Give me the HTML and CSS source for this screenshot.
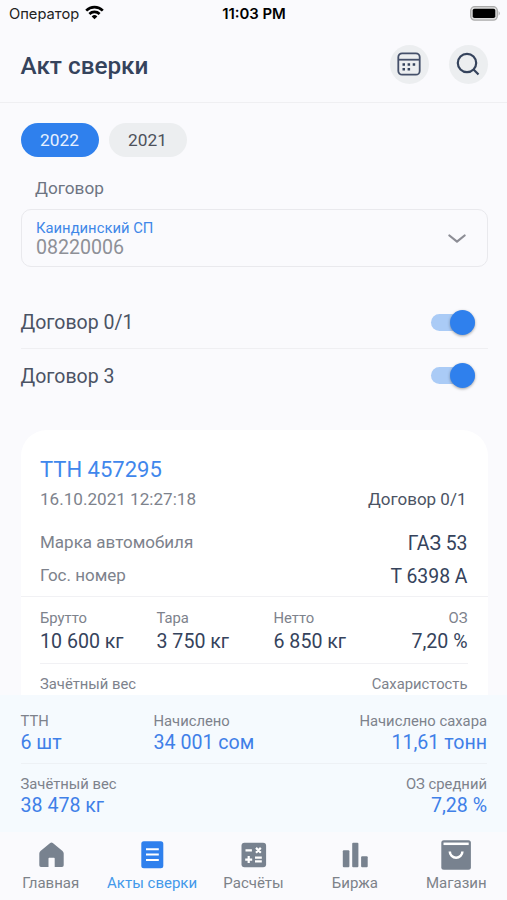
FILE: index.html
```html
<!DOCTYPE html>
<html lang="ru">
<head>
<meta charset="utf-8">
<title>Акт сверки</title>
<link rel="stylesheet" href="styles.css">
</head>
<body>
<div class="screen">
  <div class="status">
    <div class="carrier"><span>Оператор</span>
      <svg width="19" height="15" viewBox="0 0 19 15"><g fill="none" stroke="#000" stroke-width="2.7"><path d="M1.2 5.6a11.8 11.8 0 0 1 16.6 0"/><path d="M4.4 9a7.3 7.3 0 0 1 10.2 0"/></g><path d="M9.500 14.300L6.700 11.400a4 4 0 0 1 5.600 0z"/></svg>
    </div>
    <div class="clock">11:03 PM</div>
    <div class="power"><svg width="31" height="15" viewBox="0 0 31 15"><rect x=".7" y=".7" width="26.600" height="13.400" rx="4" fill="#ddd" stroke="#aaa" stroke-width="1.300"/><rect x="2.700" y="2.700" width="22.600" height="9.400" rx="1.800"/><path d="M28.600 5q2.400 2.400 0 4.800z" fill="#aaa"/></svg></div>
  </div>
  <header class="header">
    <h1>Акт сверки</h1>
    <button class="round"><svg width="24" height="24" viewBox="0 0 24 24"><g fill="none" stroke="#45506a" stroke-width="1.800"><rect x="1.300" y="1.300" width="21.400" height="21.400" rx="3.800"/><path d="M1.300 7.700h21.400"/></g><path d="M5.500 11.300h2.500v2.500h-2.500zM10.600 11.300h2.500v2.500h-2.500zM15.700 11.300h2.500v2.500h-2.500zM5.500 16.100h2.500v2.500h-2.500zM10.600 16.100h2.500v2.500h-2.500z" fill="#35435c"/></svg></button>
    <button class="round"><svg width="24" height="24" viewBox="0 0 24 24"><g fill="none" stroke="#35435c" stroke-width="2.200"><circle cx="11" cy="11" r="9.200"/><path d="M17.300 17.300l5.200 5.200"/></g></svg></button>
  </header>
  <main class="content">
    <div class="years"><button class="year on">2022</button><button class="year">2021</button></div>
    <div class="label">Договор</div>
    <div class="select">
      <div><div class="sel-name">Каиндинский СП</div><div class="sel-no">08220006</div></div>
      <svg width="18" height="10" viewBox="0 0 18 10"><path d="M1.400 1.500L9 7.700l7.600-6.200" fill="none" stroke="#8c8d95" stroke-width="2.200" stroke-linecap="round" stroke-linejoin="round"/></svg>
    </div>
    <div class="toggles">
      <div class="toggle"><span>Договор 0/1</span><i class="switch"></i></div>
      <div class="toggle"><span>Договор 3</span><i class="switch"></i></div>
    </div>
    <section class="card">
      <div class="card-top">
        <div class="ttn">ТТН 457295</div>
        <div class="line date"><span>16.10.2021 12:27:18</span><span class="contract">Договор 0/1</span></div>
        <div class="line"><span>Марка автомобиля</span><b>ГАЗ 53</b></div>
        <div class="line"><span>Гос. номер</span><b>Т 6398 А</b></div>
      </div>
      <div class="weights">
        <div><small>Брутто</small><b>10 600 кг</b></div>
        <div><small>Тара</small><b>3 750 кг</b></div>
        <div><small>Нетто</small><b>6 850 кг</b></div>
        <div class="end"><small>ОЗ</small><b>7,20 %</b></div>
      </div>
      <div class="more"><small>Зачётный вес</small><small>Сахаристость</small></div>
    </section>
  </main>
  <section class="summary">
    <div class="sum-row first">
      <div><small>ТТН</small><b>6 шт</b></div>
      <div><small>Начислено</small><b>34 001 сом</b></div>
      <div class="end"><small>Начислено сахара</small><b>11,61 тонн</b></div>
    </div>
    <div class="sum-row">
      <div><small>Зачётный вес</small><b>38 478 кг</b></div>
      <div class="end"><small>ОЗ средний</small><b>7,28 %</b></div>
    </div>
  </section>
  <nav class="tabs">
    <a><svg width="30" height="30" viewBox="0 0 30 30"><path d="M15.500 2.600Q16.200 2.600 16.800 3.100L26.500 11q1.200 1 1.200 2.500V25.300q0 1.700-1.700 1.700H18.700V18.500q0-.7-.7-.7H13.200q-.7 0-.7.700V27H5q-1.700 0-1.700-1.700V13.500Q3.300 12 4.500 11L14.200 3.100Q14.800 2.600 15.500 2.600z"/></svg><span>Главная</span></a>
    <a class="on"><svg width="30" height="30" viewBox="0 0 30 30"><rect x="4.300" y="1.300" width="22" height="27" rx="2.500"/><path d="M9 9.200h12.800M9 14.400h12.800M9 19.900h12.800" stroke="#fff" stroke-width="2"/></svg><span>Акты сверки</span></a>
    <a><svg width="30" height="30" viewBox="0 0 30 30"><rect x="3.500" y="2.700" width="24.600" height="24.600" rx="3"/><path d="M7.500 10.300h6.400M17 17.700h6.800M17 21.400h6.800M7.200 19.600h7M10.700 16.100v7M18 7.900l4.800 4.800M22.800 7.900l-4.800 4.800" stroke="#fff" stroke-width="2.200"/></svg><span>Расчёты</span></a>
    <a><svg width="30" height="30" viewBox="0 0 30 30"><rect x="2.800" y="10.200" width="6.600" height="17" rx="1"/><rect x="12.200" y="2.700" width="6.200" height="24.500" rx="1"/><rect x="21.100" y="16.300" width="6.600" height="10.900" rx="1"/></svg><span>Биржа</span></a>
    <a><svg width="30" height="30" viewBox="0 0 30 30"><rect x=".3" y=".2" width="29.600" height="29.500" rx="2.500"/><path d="M2.500 3.800h25.200" stroke="#fff" stroke-width="2.500"/><path d="M8.800 11.500a6.300 6.300 0 0 0 12.600 0" fill="none" stroke="#fff" stroke-width="2.500"/></svg><span>Магазин</span></a>
  </nav>
</div>
</body>
</html>
```
FILE: styles.css
```css
* { box-sizing: border-box; }
body { margin: 0; background: #fafafd; font-family: Roboto, "Liberation Sans", sans-serif; color: #35435c; }
button { border: 0; padding: 0; font: inherit; color: inherit; }
svg { display: block; flex: none; }
b, small { display: block; font-weight: 400; white-space: nowrap; }
.screen { width: 507px; height: 900px; display: flex; flex-direction: column; overflow: hidden; }
.status { height: 28px; flex: none; display: grid; grid-template-columns: 1fr auto 1fr; align-items: center; padding: 0 6px 0 9px; color: #000; font-family: Inter, Roboto, sans-serif; font-size: 14.700px; }
.carrier { display: flex; align-items: center; gap: 6px; color: #222; }
.carrier svg { margin-top: -3px; }
.clock { font-weight: 600; font-size: 14.900px; position: relative; left: -1px; }
.power { display: flex; justify-content: flex-end; margin-top: -2px; }
.header { height: 75px; flex: none; display: flex; align-items: center; gap: 20px; padding: 0 19.500px 2px 20.500px; border-bottom: 1px solid #efeff2; }
h1 { margin: 0 auto 0 0; font-size: 24.300px; font-weight: 500; line-height: 30px; padding-top: 3px; }
.round { width: 39px; height: 39px; border-radius: 50%; background: #eceef0; display: grid; place-items: center; }
.round svg { margin-left: -1px; }
.content { height: 592px; flex: none; overflow: hidden; padding: 20px 19.500px 0 20.500px; }
.years { display: flex; gap: 10px; }
.year { width: 78px; height: 34px; border-radius: 17px; background: #eceef0; font-size: 17.300px; color: #4d515b; }
.year.on { background: #2f80ed; color: #e6f0ff; }
.label { margin: 20px 0 0 14.500px; font-size: 17.200px; line-height: 22px; color: #6d7482; }
.select { height: 58px; margin-top: 10px; padding: 9px 21px 0 14.500px; border: 1px solid #e9e9ed; border-radius: 10px; display: flex; justify-content: space-between; }
.select svg { margin-top: 15px; }
.sel-name { font-size: 14.800px; line-height: 18px; color: #3f87e8; }
.sel-no { font-size: 19.600px; line-height: 21px; color: #8e9097; }
.toggles { margin-top: 29px; }
.toggle { height: 53px; display: flex; align-items: center; justify-content: space-between; padding-right: 12.500px; font-size: 19.500px; color: #4b5364; }
.toggle:first-child { border-bottom: 1px solid #efeff2; }
.toggle span { padding-top: 1px; }
.switch { width: 44px; height: 17px; border-radius: 9px; background: #aacbf6; display: flex; align-items: center; justify-content: flex-end; }
.switch::after { content: ""; width: 25px; height: 25px; border-radius: 50%; background: #2f80ed; box-shadow: 0 1px 3px rgba(0,0,0,.35); }
.card { margin-top: 28px; background: #fff; border-radius: 26px 26px 0 0; height: 300px; }
.card-top { height: 167px; padding: 27px 20px 0 19.500px; border-bottom: 1px solid #f1f1f4; }
.ttn { font-size: 22px; line-height: 26px; color: #3f87ec; }
.line { height: 33px; display: flex; justify-content: space-between; align-items: center; font-size: 17px; color: #7d828c; }
.line span { margin-top: -1px; }
.line.date { margin-bottom: 10px; font-size: 17.100px; }
.line b { font-size: 19.400px; line-height: 23px; padding-top: 1px; color: #35435c; }
.contract { color: #4b5364; font-size: 17px; padding-right: 1px; }
small { font-size: 14.800px; line-height: 18px; color: #7d828c; }
.weights b, .summary b { font-size: 19.600px; line-height: 26px; }
.weights b { line-height: 30px; }
.weights { height: 67px; margin: 0 20px 0 19.500px; padding-top: 12px; border-bottom: 1px solid #f1f1f4; display: grid; grid-template-columns: 116.500px 117px 117px 1fr; }
.end { text-align: right; }
.more { display: flex; justify-content: space-between; padding: 11px 20px 0 19.500px; }
.summary { height: 137px; flex: none; background: #f5fafe; padding: 0 20px 0 20.500px; }
.sum-row { display: flex; justify-content: space-between; padding-top: 11px; }
.sum-row.first { display: grid; grid-template-columns: 133px auto 1fr; height: 69px; padding-top: 17px; border-bottom: 1px solid #edf1f5; }
.summary b { color: #3f80e8; }
.tabs { flex: 1; display: grid; grid-template-columns: repeat(5, 1fr); background: #fafafd; padding-top: 8px; }
.tabs a { display: flex; flex-direction: column; align-items: center; gap: 4px; font-size: 15px; line-height: 18px; color: #7d8289; }
.tabs svg { fill: #78828f; }
.tabs .on { color: #4298ea; }
.tabs .on svg { fill: #2f80ed; }
```
